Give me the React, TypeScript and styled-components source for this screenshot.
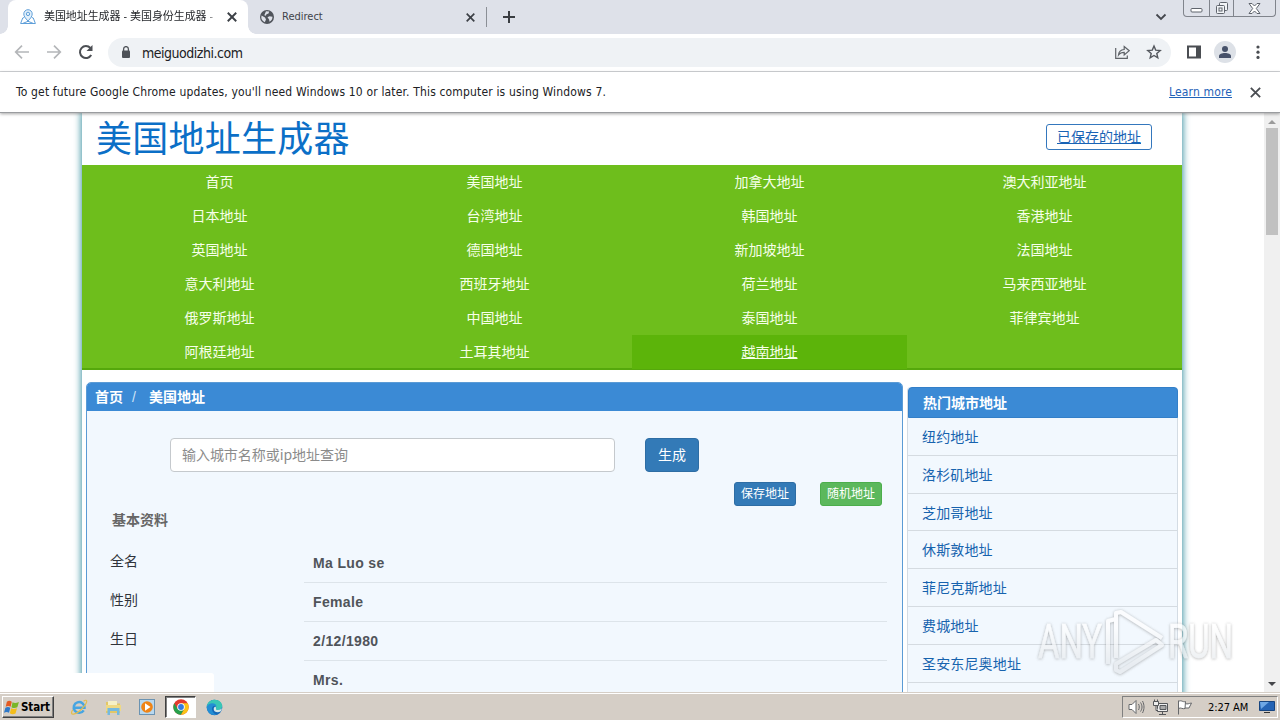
import React from "react";
import styled, { createGlobalStyle, css } from "styled-components";

const uiFont = `"DejaVu Sans Condensed", "Noto Sans CJK SC", sans-serif`;
const cjkFont = `"Noto Sans CJK SC", "Liberation Sans", sans-serif`;

const Global = createGlobalStyle`
  * { box-sizing: border-box; }
  body { margin: 0; overflow: hidden; background: #fff; }
`;

const Screen = styled.div`
  width: 1280px;
  height: 720px;
  display: flex;
  flex-direction: column;
  overflow: hidden;
  position: relative;
  font-family: ${uiFont};
  color: #202124;
`;

/* ---------- browser chrome ---------- */
const TabStrip = styled.div`
  height: 34px;
  flex: none;
  background: #dee1e9;
  display: flex;
  align-items: stretch;
  padding-left: 8px;
`;

const Tab = styled.div<{ $active?: boolean; $width: number }>`
  width: ${(p) => p.$width}px;
  display: flex;
  align-items: center;
  padding: 0 11px 0 12px;
  font-size: 11px;
  color: ${(p) => (p.$active ? "#26282c" : "#3f4349")};
  background: ${(p) => (p.$active ? "#fff" : "transparent")};
  border-radius: 8px 8px 0 0;
  position: relative;
  ${(p) =>
    p.$active &&
    css`
      &::before,
      &::after {
        content: "";
        position: absolute;
        bottom: 0;
        width: 8px;
        height: 8px;
      }
      &::before {
        left: -8px;
        background: radial-gradient(circle at 0 0, transparent 7.5px, #fff 8px);
      }
      &::after {
        right: -8px;
        background: radial-gradient(circle at 100% 0, transparent 7.5px, #fff 8px);
      }
    `}
  svg { flex: none; }
`;

const TabTitle = styled.span<{ $fade?: boolean }>`
  flex: 1;
  margin-left: 8px;
  white-space: nowrap;
  overflow: hidden;
  line-height: 18px;
  letter-spacing: ${(p) => (p.$fade ? -0.08 : 0)}px;
  ${(p) => p.$fade && css`
    mask-image: linear-gradient(90deg, #000 160px, rgba(0, 0, 0, 0.3) 172px);
  `}
`;

const TabDivider = styled.i`
  width: 1px;
  height: 20px;
  margin: 7px 14px 0 0;
  background: #8b8f96;
`;

const StripSpacer = styled.div`
  flex: 1;
`;

const WindowButtons = styled.div`
  display: flex;
  height: 17px;
  width: 93px;
  margin: 0 4px 0 16px;
  border: 1px solid #80848c;
  border-top: 0;
  border-radius: 0 0 4px 4px;
`;

const WindowButton = styled.div<{ $width: number }>`
  width: ${(p) => p.$width}px;
  display: flex;
  justify-content: center;
  align-items: center;
  & + & { border-left: 1px solid #80848c; }
`;

const Toolbar = styled.div`
  height: 38px;
  flex: none;
  display: flex;
  align-items: center;
  border-bottom: 1px solid #d3d5d8;
  padding: 0 12px 1px 14px;
`;

const NavIcons = styled.div`
  display: flex;
  gap: 16px;
  margin-right: 14px;
`;

const AddressBar = styled.div`
  flex: 1;
  height: 29px;
  background: #eff2f5;
  border-radius: 15px;
  display: flex;
  align-items: center;
  padding: 0 9px 0 12px;
`;

const Url = styled.span`
  flex: 1;
  margin-left: 10px;
  font-size: 14px;
  letter-spacing: -0.48px;
  line-height: 16px;
  padding-top: 1px;
`;

const AddressIcons = styled.div`
  display: flex;
  gap: 16px;
`;

const ToolIcons = styled.div`
  display: flex;
  align-items: center;
  gap: 12px;
  margin-left: 15px;
`;

const Avatar = styled.div`
  width: 22px;
  height: 22px;
  border-radius: 50%;
  background: #dde1e7;
  display: grid;
  place-items: center;
`;

const InfoBar = styled.div`
  height: 41px;
  flex: none;
  display: flex;
  align-items: center;
  padding: 0 19px 0 16px;
  font-size: 12px;
  border-bottom: 1px solid #9a9c9f;
  box-shadow: 0 1px 3px rgba(0, 0, 0, 0.35);
  z-index: 2;
  background: #fff;
`;

const InfoText = styled.span`
  flex: 1;
  letter-spacing: 0.16px;
`;

const LearnMore = styled.a`
  color: #1f62b8;
  text-decoration: underline;
  margin-right: 18px;
  letter-spacing: 0.14px;
`;

/* ---------- page ---------- */
const Viewport = styled.div`
  flex: 1;
  min-height: 0;
  display: flex;
  overflow: hidden;
`;

const Canvas = styled.div`
  flex: 1;
  padding-left: 82px;
  overflow: hidden;
`;

const Container = styled.main`
  width: 1100px;
  height: 620px;
  background: #fff;
  box-shadow: 0 0 7px 1px #3f94a3;
  font-family: ${cjkFont};
  font-size: 14px;
`;

const Header = styled.header`
  height: 52px;
  display: flex;
  justify-content: space-between;
  align-items: flex-start;
  padding: 0 30px 0 14px;
`;

const SiteTitle = styled.h1`
  margin: 0;
  font-size: 36px;
  line-height: 46px;
  letter-spacing: 0.25px;
  font-weight: 400;
  color: #0b6fc7;
`;

const SavedLink = styled.a`
  width: 106px;
  height: 26px;
  margin-top: 11px;
  border: 1px solid #3477bd;
  border-radius: 3px;
  text-align: center;
  line-height: 23px;
  color: #1863b5;
  text-decoration: underline;
`;

const CountryNav = styled.nav`
  height: 205px;
  display: grid;
  grid-template-columns: repeat(4, 275px);
  grid-auto-rows: 34px;
  background: #6ebe1c;
  border-bottom: 2px solid #55a80c;
`;

const CountryLink = styled.a<{ $hover?: boolean }>`
  text-align: center;
  line-height: 32px;
  color: #f6ffe9;
  background: ${(p) => (p.$hover ? "#5cb40a" : "transparent")};
  text-decoration: ${(p) => (p.$hover ? "underline" : "none")};
`;

const Columns = styled.div`
  display: flex;
  align-items: flex-start;
  gap: 4px;
  padding: 12px 4px 0;
`;

const MainPanel = styled.section`
  width: 817px;
  height: 340px;
  border: 1px solid #5b9bd5;
  border-radius: 5px 5px 0 0;
  background: #f2f8fe;
`;

const Crumbs = styled.div`
  height: 28px;
  display: flex;
  gap: 9px;
  padding-left: 8px;
  line-height: 26px;
  background: #3b8ad5;
  color: #fff;
  font-weight: 700;
  border-radius: 4px 4px 0 0;
`;

const Slash = styled.span`
  font-family: "Liberation Sans", sans-serif;
  font-weight: 400;
  line-height: 28px;
  margin-right: 4px;
  color: #cfe4f7;
`;

const SearchRow = styled.div`
  display: flex;
  gap: 30px;
  padding: 27px 0 0 83px;
`;

const SearchBox = styled.div`
  width: 445px;
  height: 34px;
  padding: 0 11px;
  line-height: 30px;
  letter-spacing: -0.05px;
  border: 1px solid #c5c9cd;
  border-radius: 4px;
  background: #fff;
  color: #8b8b8b;
`;

const Button = styled.button<{ $small?: boolean; $green?: boolean }>`
  width: ${(p) => (p.$small ? 62 : 54)}px;
  height: ${(p) => (p.$small ? 24 : 34)}px;
  padding: 0 0 2px;
  font: ${(p) => (p.$small ? 12 : 14)}px/1 ${cjkFont};
  color: #fff;
  border: 1px solid ${(p) => (p.$green ? "#4cae4c" : "#2e6da4")};
  border-radius: ${(p) => (p.$small ? 3 : 4)}px;
  background: ${(p) => (p.$green ? "#5cb85c" : "#337ab7")};
`;

const Actions = styled.div`
  display: flex;
  justify-content: flex-end;
  gap: 24px;
  padding: 10px 20px 0 0;
`;

const SectionTitle = styled.h4`
  margin: 0 0 14px 25px;
  font-size: 14px;
  line-height: 26px;
  color: #666;
`;

const Field = styled.div`
  display: grid;
  grid-template-columns: 194px 583px;
  margin-left: 23px;
  height: 39px;
`;

const FieldLabel = styled.span`
  line-height: 29px;
  color: #30343b;
`;

const FieldValue = styled.b`
  padding-left: 9px;
  line-height: 35px;
  height: 37px;
  margin-bottom: 2px;
  border-bottom: 1px solid #dde4ea;
  font-family: "Liberation Sans", sans-serif;
  letter-spacing: 0.35px;
  color: #50545a;
`;

const SidePanel = styled.aside`
  width: 271px;
  margin-top: 5px;
  border: 1px solid #d4dce4;
  border-top: 0;
  border-radius: 4px 4px 0 0;
  background: #f2f8fe;
`;

const SideTitle = styled.h3`
  margin: 0 -1px 0 0;
  height: 31px;
  padding-left: 14px;
  border: 1px solid #337fc8;
  border-radius: 4px 4px 0 0;
  font-size: 14px;
  line-height: 28px;
  color: #fff;
  background: #3b8ad5;
`;

const CityLink = styled.a`
  display: block;
  height: 37.8px;
  padding-left: 14px;
  line-height: 36px;
  letter-spacing: 0.15px;
  border-bottom: 1px solid #d5dbe1;
  color: #1763ae;
`;

const Scrollbar = styled.div`
  width: 16px;
  background: #f0f0f0;
  display: flex;
  flex-direction: column;
  align-items: center;
  padding: 7px 0 6px;
`;

const ScrollThumb = styled.div`
  width: 12px;
  height: 107px;
  margin: 4px 0 auto;
  background: #c1c1c1;
`;

const Arrow = styled.i<{ $down?: boolean }>`
  border: 4px solid transparent;
  ${(p) =>
    p.$down
      ? "border-top-color: #45474b; border-bottom: 0;"
      : "border-bottom-color: #9b9b9b; border-top: 0;"}
`;

const StatusBubble = styled.div`
  position: absolute;
  left: 0;
  top: 673px;
  width: 214px;
  height: 19px;
  background: #fff;
  border-top-right-radius: 3px;
`;

const Watermark = styled.svg`
  position: absolute;
  left: 1034px;
  top: 604px;
`;

/* ---------- taskbar ---------- */
const Taskbar = styled.div`
  height: 28px;
  flex: none;
  display: flex;
  align-items: flex-start;
  background: #d5cec6;
  border-top: 1px solid #d5cec6;
  box-shadow: inset 0 1px 0 #fff;
  padding: 3px 2px 0;
  z-index: 3;
`;

const StartButton = styled.div`
  width: 52px;
  height: 22px;
  display: flex;
  align-items: center;
  gap: 1px;
  padding-left: 1px;
  border: 1px solid;
  border-color: #fff #404040 #404040 #fff;
  box-shadow: inset -1px -1px 0 #808080;
  font-weight: 700;
  font-size: 11.5px;
  letter-spacing: -0.1px;
  color: #000;
  white-space: nowrap;
  svg { flex: none; }
`;

const Launcher = styled.div`
  display: flex;
  margin-left: 8px;
`;

const LaunchItem = styled.div<{ $pressed?: boolean }>`
  width: ${(p) => (p.$pressed ? 31 : 34)}px;
  margin-left: ${(p) => (p.$pressed ? 1 : 0)}px;
  margin-right: ${(p) => (p.$pressed ? 1 : 0)}px;
  height: 22px;
  display: grid;
  place-items: center;
  ${(p) =>
    p.$pressed &&
    css`
      background: #fff;
      border: 1px solid;
      border-color: #404040 #fff #fff #404040;
      box-shadow: inset 1px 1px 0 #808080;
    `}
`;

const Tray = styled.div`
  width: 156px;
  height: 22px;
  margin-left: auto;
  display: flex;
  align-items: center;
  gap: 7px;
  padding-left: 5px;
  border: 1px solid;
  border-color: #808080 #fff #fff #808080;
  font-size: 11px;
  color: #000;
  svg { flex: none; }
`;

const Clock = styled.span`
  width: 44px;
  margin: 0 0 0 8px;
  white-space: nowrap;
  letter-spacing: -0.05px;
`;

const Cross = ({ size = 9, color = "#3c4046", w = 1.7 }: { size?: number; color?: string; w?: number }) => (
  <svg width={size} height={size} viewBox="0 0 9 9" stroke={color} strokeWidth={w} fill="none">
    <path d="M.7.7l7.6 7.6M8.3.7L.7 8.3" />
  </svg>
);

const PinIcon = () => (
  <svg width="16" height="16" viewBox="0 0 16 16" fill="none" stroke="#5f9fd9" strokeWidth="1">
    <path d="M8 12C5.3 9.2 3.8 7.2 3.8 4.9a4.2 4.2 0 0 1 8.4 0C12.200 7.200 10.700 9.200 8 12z" fill="#e2f0fb" />
    <circle cx="8" cy="4.900" r="1.700" />
    <path d="M4.200 8.500L2.700 9 .6 14.500h14.800L13.300 9l-1.500-.5M3 14.300l5-2 5 2" />
  </svg>
);

const GlobeIcon = () => (
  <svg width="14" height="14" viewBox="0 0 14 14">
    <circle cx="7" cy="7" r="7" fill="#50545b" />
    <path d="M1.500 5.500L5 7.500l1 2-1.200 2.700A6 6 0 0 1 1.500 5.500zM6 1.300l3.200.2-.7 2-2 .7-.7 1.600-1.500-.5zM7.500 7.200l2-1 3 .5c0 2-1 4-3 5l-.4-2.200z" fill="#dee1e9" />
  </svg>
);

const BackIcon = ({ flip }: { flip?: boolean }) => (
  <svg width="16" height="16" viewBox="0 0 16 16" fill="none" stroke="#b4b6b9" strokeWidth="1.700" transform={flip ? "scale(-1 1)" : undefined}>
    <path d="M15 8H2M8 1.700L1.700 8 8 14.300" />
  </svg>
);

const ReloadIcon = () => (
  <svg width="16" height="16" viewBox="0 0 16 16">
    <path d="M13.200 11A6 6 0 1 1 12.400 4" fill="none" stroke="#4c4f54" strokeWidth="2" />
    <path d="M14.500 1v6h-6z" fill="#4c4f54" />
  </svg>
);

const LockIcon = () => (
  <svg width="12" height="13" viewBox="0 0 12 13">
    <rect x="2" y="4.500" width="8" height="7.500" rx="1" fill="#4e5258" />
    <path d="M3.600 5V3a2.400 2.400 0 0 1 4.800 0v2" fill="none" stroke="#4e5258" strokeWidth="1.300" />
  </svg>
);

const ShareIcon = () => (
  <svg width="16" height="16" viewBox="0 0 16 16" fill="none" stroke="#5f6368" strokeWidth="1.200">
    <path d="M1.700 4v10.400h11.600V11.500M4.500 11c.3-3.600 2.300-5.300 5.700-5.500V2.500l5 4.200-5 4.200V8.300c-2.500 0-4.300.7-5.700 2.700z" />
  </svg>
);

const StarIcon = () => (
  <svg width="16" height="16" viewBox="0 0 16 16" fill="none" stroke="#53575d" strokeWidth="1.400">
    <path d="M8 2l1.700 4.100 4.500.4-3.400 2.900 1 4.400L8 11.500l-3.800 2.300 1-4.400-3.400-2.900 4.500-.4z" />
  </svg>
);

const WindowsLogo = () => (
  <svg width="16" height="15" viewBox="0 0 15 14">
    <path d="M2.700 1.500c1.500-1 3-1 4.600.1L6.200 6.400c-1.500-1-3-1-4.600 0z" fill="#e45b23" />
    <path d="M8 2c1.700 1 3.300.9 6-.2l-1.500 5c-2 1-3.900 1-5.500-.1z" fill="#79b629" />
    <path d="M1.300 7.300c1.700-1 3.200-.9 4.600 0l-1.200 4.700c-1.500-1-3-1-4.700 0z" fill="#2f79c9" />
    <path d="M6.700 7.700c1.600 1 3.200.9 5.500.1l-1.400 4.800c-2 1-3.700.9-5.300-.2z" fill="#f4bd1a" />
  </svg>
);

const ChromeLogo = () => (
  <svg width="16" height="16" viewBox="0 0 16 16">
    <circle cx="8" cy="8" r="7.700" fill="#e33b2e" />
    <path d="M1.300 4.200A7.700 7.700 0 0 0 8 15.700l3.400-5.900L8 8 4.700 10z" fill="#26a04b" />
    <path d="M8 15.700A7.700 7.700 0 0 0 14.700 4.200H8l3.400 5.600z" fill="#fbc316" />
    <circle cx="8" cy="8" r="3.800" fill="#fff" />
    <circle cx="8" cy="8" r="2.900" fill="#337be0" />
  </svg>
);

const IeLogo = () => (
  <svg width="18" height="18" viewBox="0 0 18 18" fill="none">
    <path d="M13.700 12.300A5.400 5.400 0 1 1 14.500 9.700H5" stroke="#46a5e2" strokeWidth="2.500" />
    <path d="M13.500 3.200c2.200-1.500 3.500-1.200 3.200.5-.6 3.600-8.500 11.800-13.200 12.500-2.400.2-2.500-1.700-.8-4.500" stroke="#e3bd4b" strokeWidth="1.200" />
  </svg>
);

const FolderIcon = () => (
  <svg width="17" height="17" viewBox="0 0 17 17">
    <path d="M1 3h5l1 1.500h8V14H1z" fill="#e3c767" />
    <path d="M3 2h9v5H3z" fill="#f6f0c6" />
    <path d="M1 6h15v6H1z" fill="#efd984" />
    <path d="M2.500 16V9h12v7H12v-4H5v4z" fill="#75b9df" />
  </svg>
);

const PlayerIcon = () => (
  <svg width="16" height="16" viewBox="0 0 16 16">
    <rect x=".5" y=".5" width="15" height="15" fill="#b8d8ef" stroke="#6b93b2" />
    <circle cx="8" cy="8" r="5.800" fill="#ef8416" />
    <path d="M6 4.300L11.500 8 6 11.700z" fill="#fff" />
  </svg>
);

const EdgeLogo = () => (
  <svg width="17" height="17" viewBox="0 0 17 17">
    <circle cx="8.500" cy="8.500" r="7.800" fill="#1469b9" />
    <path d="M.8 8C1 3 5 .7 8.700.7c4.600 0 7.500 3 7.500 6.300 0 2.600-2 4-4.200 4-1.600 0-2.500-.7-2-1.500.8-2-.6-3.500-3-3.500C4 6 1.500 6.700.8 8z" fill="#39c6b6" />
    <path d="M.8 8c.8-2.400 3-3.700 5.600-3.700 2 0 3.800 1 4 3C8 5.500 5.300 8 6 11c.5 2 2 4 4.500 4.800C5 17 .6 13 .8 8z" fill="#238ed4" />
    <path d="M10 9.500c-.5.8.4 1.500 2 1.500 1.500 0 2.900-.5 3.700-1.700.2 1-.2 2-1 3-2.500 1.700-7 1-7-2.300 0-1 .7-2 1.500-2.500.8.500 1 1.200.8 2z" fill="#d6e8e8" />
  </svg>
);

const countries = [
  "首页", "美国地址", "加拿大地址", "澳大利亚地址",
  "日本地址", "台湾地址", "韩国地址", "香港地址",
  "英国地址", "德国地址", "新加坡地址", "法国地址",
  "意大利地址", "西班牙地址", "荷兰地址", "马来西亚地址",
  "俄罗斯地址", "中国地址", "泰国地址", "菲律宾地址",
  "阿根廷地址", "土耳其地址", "越南地址",
];

const fields = [
  ["全名", "Ma Luo se"],
  ["性别", "Female"],
  ["生日", "2/12/1980"],
  ["", "Mrs."],
];

const cities = ["纽约地址", "洛杉矶地址", "芝加哥地址", "休斯敦地址", "菲尼克斯地址", "费城地址", "圣安东尼奥地址", ""];

export default function App() {
  return (
    <Screen>
      <Global />
      <TabStrip>
        <Tab $active $width={240}>
          <PinIcon />
          <TabTitle $fade>美国地址生成器 - 美国身份生成器 -</TabTitle>
          <Cross size={10} />
        </Tab>
        <Tab $width={238}>
          <GlobeIcon />
          <TabTitle>Redirect</TabTitle>
          <Cross size={9} />
        </Tab>
        <TabDivider />
        <svg width="16" height="34" viewBox="0 0 16 34" stroke="#3a3d42" strokeWidth="2">
          <path d="M2 17h12M8 11v12" />
        </svg>
        <StripSpacer />
        <svg width="12" height="34" viewBox="0 0 12 34" fill="none" stroke="#44474d" strokeWidth="1.800">
          <path d="M1.500 14.500L6 19l4.500-4.500" />
        </svg>
        <WindowButtons>
          <WindowButton $width={25}>
            <svg width="13" height="16" fill="#fff" stroke="#5f646d"><rect x="1" y="8.500" width="11" height="3.500" rx="1" /></svg>
          </WindowButton>
          <WindowButton $width={25}>
            <svg width="14" height="15" fill="#f2f4f7" stroke="#5f646d"><rect x="4.500" y="1.500" width="8" height="8" rx="1" /><rect x="1.500" y="4.500" width="8" height="8" rx="1" /><rect x="4" y="7" width="3" height="3" /></svg>
          </WindowButton>
          <WindowButton $width={42}>
            <svg width="13" height="13" viewBox="0 0 13 13" fill="#fff" stroke="#5f646d"><path d="M1 1.500h3L6.500 4 9 1.500h3L8.300 6.500l3.700 5H9L6.500 9 4 11.500H1l3.700-5z" /></svg>
          </WindowButton>
        </WindowButtons>
      </TabStrip>

      <Toolbar>
        <NavIcons>
          <BackIcon />
          <BackIcon flip />
          <ReloadIcon />
        </NavIcons>
        <AddressBar>
          <LockIcon />
          <Url>meiguodizhi.com</Url>
          <AddressIcons>
            <ShareIcon />
            <StarIcon />
          </AddressIcons>
        </AddressBar>
        <ToolIcons>
          <svg width="16" height="16"><path d="M2 2.500h12v11H2z" fill="#fff" stroke="#4a4d52" strokeWidth="2" /><path d="M10 2h4v12h-4z" fill="#4a4d52" /></svg>
          <Avatar>
            <svg width="14" height="14" fill="#47526a"><circle cx="7" cy="4" r="3" /><path d="M1 13v-2c0-2 3-3 6-3s6 1 6 3v2z" /></svg>
          </Avatar>
          <svg width="20" height="16" fill="#4a4d52"><circle cx="10" cy="3" r="1.600" /><circle cx="10" cy="8.200" r="1.600" /><circle cx="10" cy="13.400" r="1.600" /></svg>
        </ToolIcons>
      </Toolbar>

      <InfoBar>
        <InfoText>To get future Google Chrome updates, you'll need Windows 10 or later. This computer is using Windows 7.</InfoText>
        <LearnMore>Learn more</LearnMore>
        <Cross size={11} color="#4a4d52" w={1.5} />
      </InfoBar>

      <Viewport>
        <Canvas>
          <Container>
            <Header>
              <SiteTitle>美国地址生成器</SiteTitle>
              <SavedLink>已保存的地址</SavedLink>
            </Header>
            <CountryNav>
              {countries.map((name) => (
                <CountryLink key={name} $hover={name === "越南地址"}>{name}</CountryLink>
              ))}
            </CountryNav>
            <Columns>
              <MainPanel>
                <Crumbs>
                  <span>首页</span>
                  <Slash>/</Slash>
                  <span>美国地址</span>
                </Crumbs>
                <SearchRow>
                  <SearchBox>输入城市名称或ip地址查询</SearchBox>
                  <Button>生成</Button>
                </SearchRow>
                <Actions>
                  <Button $small>保存地址</Button>
                  <Button $small $green>随机地址</Button>
                </Actions>
                <SectionTitle>基本资料</SectionTitle>
                {fields.map(([label, value]) => (
                  <Field key={value}>
                    <FieldLabel>{label}</FieldLabel>
                    <FieldValue>{value}</FieldValue>
                  </Field>
                ))}
              </MainPanel>
              <SidePanel>
                <SideTitle>热门城市地址</SideTitle>
                {cities.map((name) => (
                  <CityLink key={name}>{name}</CityLink>
                ))}
              </SidePanel>
            </Columns>
          </Container>
        </Canvas>
        <Scrollbar>
          <Arrow />
          <ScrollThumb />
          <Arrow $down />
        </Scrollbar>
      </Viewport>

      <StatusBubble />

      <Watermark width="204" height="76" viewBox="0 0 204 76">
        <defs>
          <filter id="soft" x="-10%" y="-10%" width="120%" height="130%">
            <feDropShadow dx="0" dy="0.500" stdDeviation="1.800" floodColor="#666" floodOpacity="0.750" />
          </filter>
          <linearGradient id="fade" x1="0" y1="0" x2="0" y2="76" gradientUnits="userSpaceOnUse">
            <stop offset="0.300" stopColor="#fff" />
            <stop offset="0.800" stopColor="#e4e8ec" />
          </linearGradient>
        </defs>
        <g filter="url(#soft)" opacity="0.700">
          <g fill="url(#fade)" stroke="url(#fade)" strokeWidth="0.600" fontFamily="Roboto, sans-serif" fontSize="49">
            <text x="4" y="54" textLength="64" lengthAdjust="spacingAndGlyphs">ANY</text>
            <text x="134" y="54" textLength="65" lengthAdjust="spacingAndGlyphs">RUN</text>
          </g>
          <g fill="none" stroke="url(#fade)" strokeWidth="4" strokeLinejoin="round">
            <path d="M74 60V17l8-2" />
            <path d="M82 54V9l5-1 41 26" />
            <path d="M82 66v-6l40-24 6 5-42 27z" />
          </g>
        </g>
      </Watermark>

      <Taskbar>
        <StartButton>
          <WindowsLogo />
          Start
        </StartButton>
        <Launcher>
          <LaunchItem><IeLogo /></LaunchItem>
          <LaunchItem><FolderIcon /></LaunchItem>
          <LaunchItem><PlayerIcon /></LaunchItem>
          <LaunchItem $pressed><ChromeLogo /></LaunchItem>
          <LaunchItem><EdgeLogo /></LaunchItem>
        </Launcher>
        <Tray>
          <svg width="17" height="16" viewBox="0 0 17 16" fill="#fff" stroke="#66686b"><path d="M1 5.500h3l4-4v13l-4-4H1z" /><path d="M10.500 5c1 2 1 4 0 6M12.500 3.500c2 3 2 6 0 9M14.500 2c2 4 2 8 0 12" fill="none" /></svg>
          <svg width="17" height="16" viewBox="0 0 17 16" fill="#eee" stroke="#55575a"><path d="M5.500 4.500h10v8h-10zM7 15.500h7M10.500 12.500v3" /><path d="M1.500 2.500h5v4h-5zM2.500.5v2M5.500.5v2M4 6.500v5h2" /><path d="M8 6.500h6v4H8z" fill="#aaa" /></svg>
          <svg width="17" height="16" viewBox="0 0 17 16" fill="#fff" stroke="#66686b"><path d="M2.500 15.500V1.500M2.500 2.500c3-2 4 1 7 0l-.5 7c-2.500 1-4-1.500-6.500 0zM9.500 4.500c2 1 3 0 6-.5l-2.500 5H9" /></svg>
          <Clock>2:27 AM</Clock>
          <svg width="16" height="14" viewBox="0 0 16 14"><path d="M.5 1.500h15v9H.5z" fill="#2564b5" stroke="#174580" /><path d="M1 2h9L2 9z" fill="#6ea7e5" /><path d="M5 12.500h6" stroke="#333" /></svg>
        </Tray>
      </Taskbar>
    </Screen>
  );
}
